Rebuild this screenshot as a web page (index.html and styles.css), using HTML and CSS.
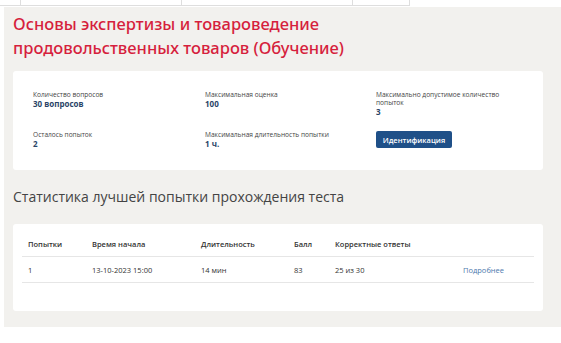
FILE: index.html
```html
<!DOCTYPE html>
<html lang="ru">
<head>
    <meta charset="UTF-8">
    <meta name="viewport" content="width=device-width, initial-scale=1.0">
    <title>Тест</title>
    <link rel="stylesheet" href="styles.css">
</head>
<body>

    <div class="top-strip">
        <div class="strip-cell c1"></div>
        <div class="strip-cell c2"></div>
        <div class="strip-cell c3"></div>
        <div class="strip-cell c4"></div>
    </div>

    <div class="page">
        <h1 class="test-title">Основы экспертизы и товароведение продовольственных товаров (Обучение)</h1>

        <div class="card info-card">
            <div class="info-item">
                <div class="info-label">Количество вопросов</div>
                <div class="info-value">30 вопросов</div>
            </div>
            <div class="info-item">
                <div class="info-label">Максимальная оценка</div>
                <div class="info-value">100</div>
            </div>
            <div class="info-item">
                <div class="info-label">Максимально допустимое количество попыток</div>
                <div class="info-value">3</div>
            </div>
            <div class="info-item">
                <div class="info-label">Осталось попыток</div>
                <div class="info-value">2</div>
            </div>
            <div class="info-item">
                <div class="info-label">Максимальная длительность попытки</div>
                <div class="info-value">1 ч.</div>
            </div>
            <div class="info-item">
                <button class="btn-ident" type="button">Идентификация</button>
            </div>
        </div>

        <h2 class="section-title">Статистика лучшей попытки прохождения теста</h2>

        <div class="card stats-card">
            <table class="stats-table">
                <thead>
                    <tr>
                        <th class="col-n">Попытки</th>
                        <th class="col-start">Время начала</th>
                        <th class="col-dur">Длительность</th>
                        <th class="col-score">Балл</th>
                        <th class="col-correct">Корректные ответы</th>
                        <th></th>
                    </tr>
                </thead>
                <tbody>
                    <tr>
                        <td>1</td>
                        <td>13-10-2023 15:00</td>
                        <td>14 мин</td>
                        <td>83</td>
                        <td>25 из 30</td>
                        <td><a href="#">Подробнее</a></td>
                    </tr>
                </tbody>
            </table>
        </div>
    </div>

</body>
</html>
```

FILE: styles.css
```css
body {
    margin: 0;
    font-family: "Open Sans", "Noto Sans", sans-serif;
    background-color: #ffffff;
    color: #333;
}
.top-strip {
    display: flex;
    height: 6px;
}
.strip-cell {
    border-right: 1px solid #dedede;
    border-bottom: 1px solid #dedede;
}
.c1 { width: 20px; }
.c2 { width: 160px; }
.c3 { width: 170px; }
.c4 { width: 56px; }

.page {
    margin-left: 4px;
    margin-top: 1px;
    background-color: #f2f1ee;
    padding: 5px 18px 16px 9px;
}
.test-title {
    margin: 0;
    font-family: "Noto Sans", sans-serif;
    font-size: 16.5px;
    line-height: 24px;
    font-weight: 500;
    color: #d61f3d;
    max-width: 345px;
}
.card {
    background-color: white;
    border-radius: 3px;
}
.info-card {
    margin-top: 11px;
    display: grid;
    grid-template-columns: 172px 171px 1fr;
    row-gap: 14px;
    padding: 20px 28px 21px 20px;
}
.info-label {
    font-size: 6.6px;
    line-height: 8px;
    color: #444;
}
.info-value {
    font-size: 8px;
    line-height: 10px;
    font-weight: 700;
    color: #2a4467;
}
.btn-ident {
    display: block;
    font-family: "Open Sans", sans-serif;
    font-size: 7.5px;
    font-weight: 600;
    color: white;
    background-color: #1f5088;
    border: none;
    border-radius: 2px;
    width: 76px;
    height: 17px;
    padding: 0;
}
.section-title {
    margin: 18px 0 18px;
    font-size: 14px;
    line-height: 18px;
    font-weight: 400;
    color: #444;
}
.stats-card {
    padding: 8px 9px 28px;
}
.stats-table {
    width: 100%;
    table-layout: fixed;
    border-collapse: collapse;
    font-size: 7.5px;
    text-align: left;
}
.stats-table th {
    font-weight: 600;
    height: 24px;
    padding: 0 0 0 6px;
    border-bottom: 1px solid #e6e6e6;
}
.stats-table td {
    height: 25px;
    padding: 0 0 0 6px;
    border-bottom: 1px solid #e6e6e6;
}
.col-n { width: 58px; }
.col-start { width: 103px; }
.col-dur { width: 87px; }
.col-score { width: 35px; }
.col-correct { width: 122px; }
.stats-table a {
    color: #4d79ad;
    text-decoration: none;
}
```
